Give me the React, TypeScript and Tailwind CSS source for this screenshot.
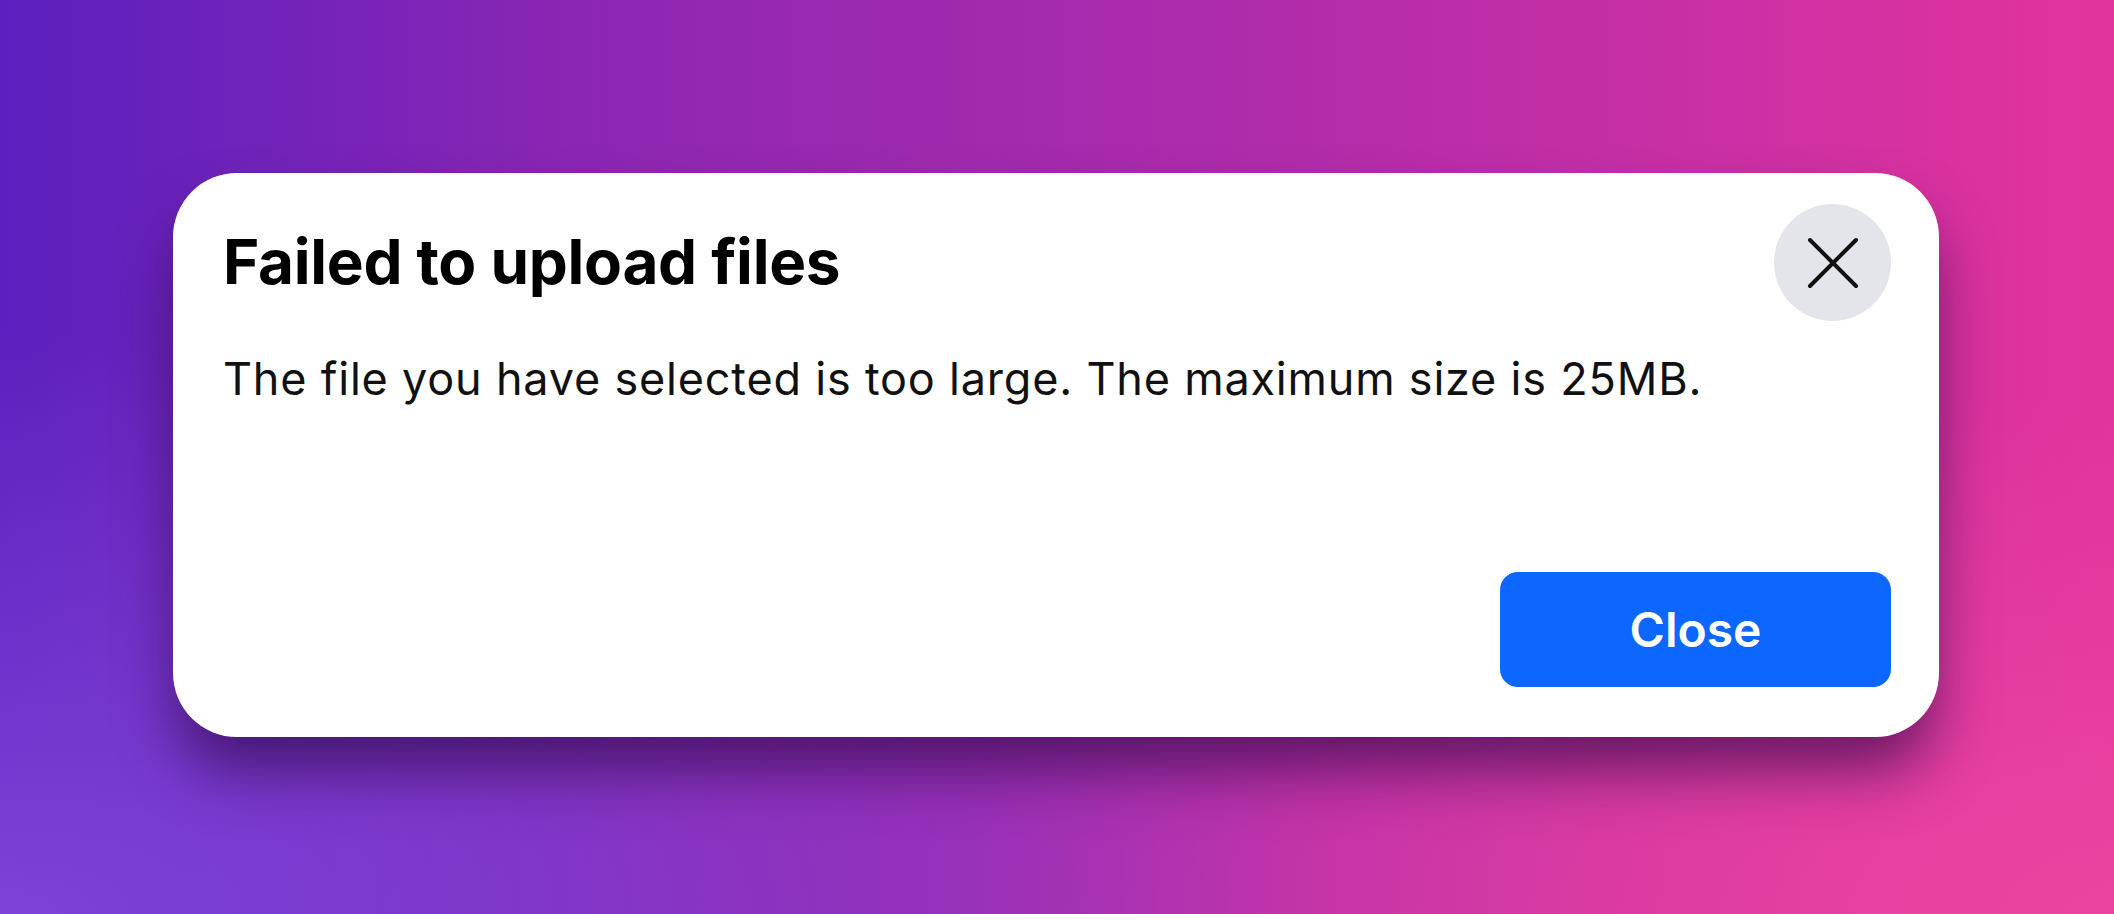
export default function App() {
  return (
    <div className="w-full h-[914px] overflow-hidden pl-[173px] pt-[173px] bg-[radial-gradient(ellipse_at_0%_100%,#7d42d6_0%,transparent_45%),radial-gradient(ellipse_at_100%_100%,#ea44a0_0%,transparent_40%),linear-gradient(to_right,#5b20bf_0%,#8f27b2_30%,#b02cab_60%,#e3339d_100%)] font-['Inter','Noto_Sans',sans-serif]">
      <div className="w-[1766px] h-[564px] rounded-[64px] bg-white flex flex-col shadow-[0_38px_60px_-6px_rgba(45,8,70,0.68)]">
        <div className="flex items-start justify-between pt-[31px] pl-[50px] pr-[48px]">
          <h1 className="mt-[27px] text-[62px] leading-none font-bold text-black tracking-[-0.3px]">
            Failed to upload files
          </h1>
          <button className="w-[117px] h-[117px] rounded-full bg-[#e4e5ea] flex items-center justify-center">
            <svg width="52" height="52" viewBox="0 0 52 52" fill="none" stroke="#111" strokeWidth="4" strokeLinecap="round">
              <line x1="3" y1="3" x2="49" y2="49" />
              <line x1="49" y1="3" x2="3" y2="49" />
            </svg>
          </button>
        </div>
        <p className="mt-[35px] px-[50px] text-[45px] leading-none text-[#111] tracking-[0.8px]">
          The file you have selected is too large. The maximum size is 25MB.
        </p>
        <div className="mt-auto flex justify-end pr-[48px] pb-[50px]">
          <button className="w-[391px] h-[115px] rounded-[18px] bg-[#0b67fe] text-white text-[48px] font-semibold">
            Close
          </button>
        </div>
      </div>
    </div>
  );
}
